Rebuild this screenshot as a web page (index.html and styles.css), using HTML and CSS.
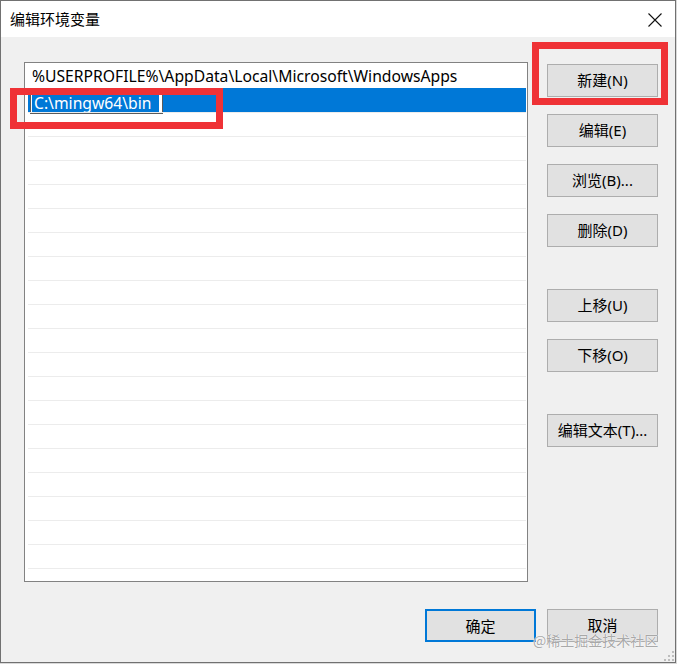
FILE: index.html
```html
<!DOCTYPE html>
<html lang="zh-CN">
<head>
<meta charset="utf-8">
<title>编辑环境变量</title>
<link rel="stylesheet" href="styles.css">
</head>
<body>
<div class="window">
  <div class="titlebar">
    <span class="title">编辑环境变量</span>
    <span class="close">
      <svg width="14" height="14" viewBox="0 0 14 14"><path d="M0.5 0.5 L13.5 13.5 M13.5 0.5 L0.5 13.5" stroke="#111" stroke-width="1.1" fill="none"/></svg>
    </span>
  </div>
  <div class="content">
    <div class="main">
      <div class="listbox">
        <div class="row first">%USERPROFILE%\AppData\Local\Microsoft\WindowsApps</div>
        <div class="row selected"><span class="editbox"><span class="sel">C:\mingw64\bin</span></span></div>
        <div class="row"></div>
        <div class="row"></div>
        <div class="row"></div>
        <div class="row"></div>
        <div class="row"></div>
        <div class="row"></div>
        <div class="row"></div>
        <div class="row"></div>
        <div class="row"></div>
        <div class="row"></div>
        <div class="row"></div>
        <div class="row"></div>
        <div class="row"></div>
        <div class="row"></div>
        <div class="row"></div>
        <div class="row"></div>
        <div class="row"></div>
        <div class="row"></div>
        <div class="row"></div>
        <div class="row"></div>
        <div class="row"></div>
      </div>
      <div class="side">
        <button class="btn">新建(N)</button>
        <button class="btn">编辑(E)</button>
        <button class="btn">浏览(B)...</button>
        <button class="btn">删除(D)</button>
        <button class="btn group">上移(U)</button>
        <button class="btn">下移(O)</button>
        <button class="btn group">编辑文本(T)...</button>
      </div>
    </div>
    <div class="footer">
      <button class="btn default">确定</button>
      <button class="btn">取消</button>
    </div>
  </div>
  <div class="annot annot-edit"></div>
  <div class="annot annot-new"></div>
  <div class="watermark">@稀土掘金技术社区</div>
  <svg class="grip" width="12" height="12" viewBox="0 0 12 12">
    <rect x="9" y="1" width="2" height="2" fill="#bdbdbd"/>
    <rect x="5" y="5" width="2" height="2" fill="#bdbdbd"/>
    <rect x="9" y="5" width="2" height="2" fill="#bdbdbd"/>
    <rect x="1" y="9" width="2" height="2" fill="#bdbdbd"/>
    <rect x="5" y="9" width="2" height="2" fill="#bdbdbd"/>
    <rect x="9" y="9" width="2" height="2" fill="#bdbdbd"/>
  </svg>
</div>
</body>
</html>
```
FILE: styles.css
```css
* { box-sizing: border-box; }
html, body {
  margin: 0;
  padding: 0;
  background: #d9d9d9;
}
body {
  font-family: "Noto Sans", "Noto Sans CJK SC", sans-serif;
  font-size: 15px;
  color: #000;
  width: 677px;
  height: 664px;
  overflow: hidden;
}
.window {
  position: relative;
  width: 676px;
  height: 663px;
  border: 1px solid #717171;
  background: #f0f0f0;
  display: flex;
  flex-direction: column;
}
.titlebar {
  height: 36px;
  background: #fff;
  display: flex;
  align-items: center;
  justify-content: space-between;
  padding: 0 13px 0 9px;
  flex: none;
}
.title {
  font-size: 15px;
  line-height: 20px;
  margin-top: -1px;
  font-family: "Noto Sans CJK SC", sans-serif;
}
.close {
  display: flex;
  width: 14px;
  height: 14px;
  margin-top: 1px;
}
.content {
  flex: 1;
  padding: 25px 0 0 23px;
  display: flex;
  flex-direction: column;
}
.main {
  display: flex;
  align-items: flex-start;
  gap: 19px;
}
.listbox {
  width: 504px;
  height: 520px;
  border: 1px solid #828282;
  background: #fff;
  padding: 1px 1px 0 3px;
  overflow: hidden;
  flex: none;
  font-size: 15.7px;
}
.row {
  position: relative;
  height: 24px;
  border-top: 1px solid #ececec;
  line-height: 23px;
  padding-left: 4px;
  white-space: nowrap;
}
.row.first {
  border-top-color: #fff;
}
.row.selected {
  background: #0078d7;
  border-top-color: #0078d7;
}
.editbox {
  position: absolute;
  left: 2px;
  top: -1px;
  width: 133px;
  height: 26px;
  background: #fff;
  border: 1px solid #5a5a5a;
  padding: 5px 0 0 1px;
}
.sel {
  display: block;
  width: 127px;
  background: #0078d7;
  color: #fff;
  line-height: 18px;
  height: 18px;
  padding: 0 0 0 2px;
}
.side {
  display: flex;
  flex-direction: column;
  gap: 17px;
  margin-top: 2px;
  width: 111px;
  flex: none;
}
.btn {
  font: inherit;
  font-size: 15px;
  color: #000;
  width: 111px;
  height: 33px;
  background: #e1e1e1;
  border: 1px solid #adadad;
  border-radius: 0;
  padding: 0;
  margin: 0;
  line-height: 31px;
  text-align: center;
}
.btn.group {
  margin-top: 25px;
}
.btn.default {
  border: 2px solid #0078d7;
}
.footer {
  display: flex;
  justify-content: flex-end;
  gap: 11px;
  margin-top: 27px;
  padding-right: 17px;
}
.annot {
  position: absolute;
  border: 7px solid #ef3236;
}
.annot-edit {
  left: 9px;
  top: 87px;
  width: 213px;
  height: 41px;
}
.annot-new {
  left: 531px;
  top: 41px;
  width: 136px;
  height: 63px;
}
.watermark {
  position: absolute;
  left: 532px;
  top: 630px;
  font-family: "Noto Sans CJK SC", sans-serif;
  font-size: 14px;
  line-height: 18px;
  color: rgba(145, 145, 145, 0.8);
  text-shadow: 0 0 1px #fff, 0 0 1px #fff;
}
.grip {
  position: absolute;
  right: 0;
  bottom: 0;
}
```
